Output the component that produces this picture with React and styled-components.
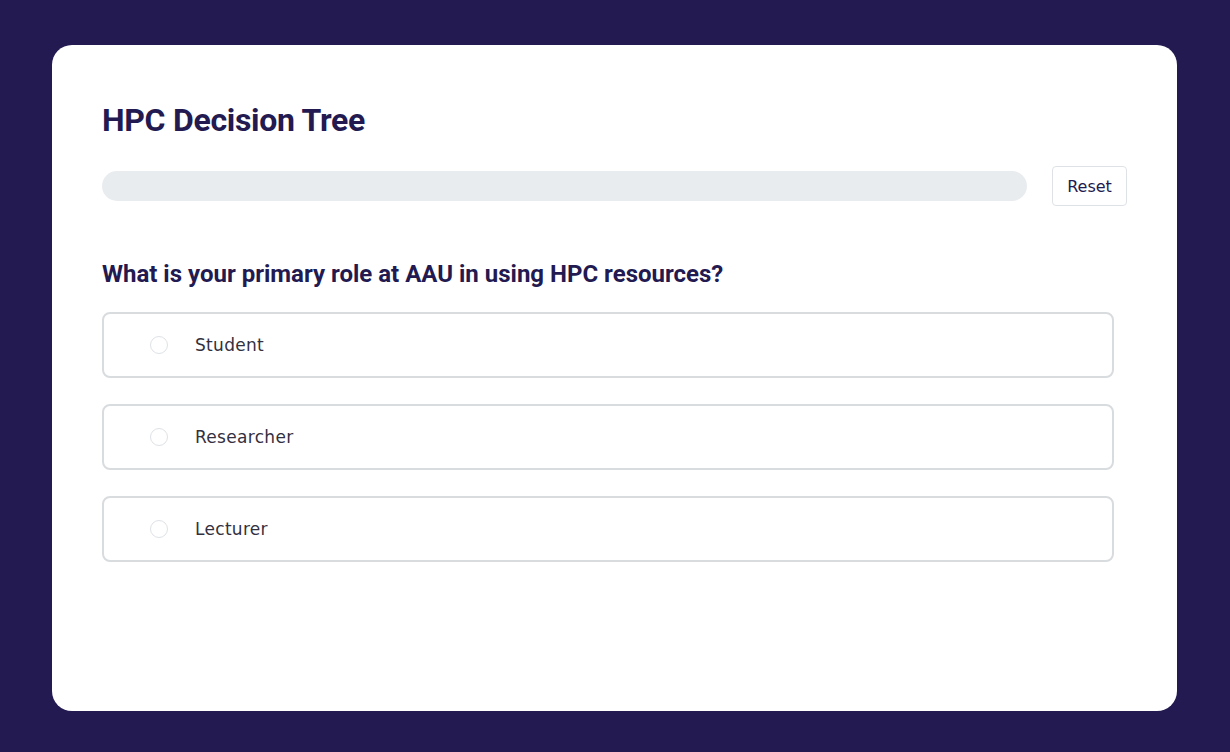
import styled, { createGlobalStyle } from "styled-components"

const GlobalStyle = createGlobalStyle`
    html, body {
        margin: 0;
        padding: 0;
        background: #221a50;
    }
    body {
        font-family: "DejaVu Sans", "Open Sans", sans-serif;
    }
`

const Page = styled.div`
    min-height: 752px;
    box-sizing: border-box;
    padding: 45px 53px 41px 52px;
    background: #221a50;
`

const Card = styled.div`
    background: #fff;
    border-radius: 20px;
    box-sizing: border-box;
    height: 666px;
    padding: 55px 50px 50px;
`

const Title = styled.h1`
    margin: 0 0 26px;
    font-family: Roboto, sans-serif;
    font-weight: 700;
    font-size: 32px;
    line-height: 40px;
    color: #221a50;
    letter-spacing: -0.3px;
`

const ProgressRow = styled.div`
    display: flex;
    align-items: center;
    gap: 25px;
`

const Track = styled.div`
    flex: 1;
    height: 30px;
    border-radius: 15px;
    background: #e9ecef;
    overflow: hidden;
`

const Fill = styled.div`
    height: 100%;
    background: #221a50;
`

const ResetButton = styled.button`
    width: 75px;
    height: 40px;
    padding: 0;
    border: 1px solid #dee2e6;
    border-radius: 4px;
    background: #fff;
    color: #221a50;
    font-family: "DejaVu Sans", sans-serif;
    font-size: 16px;
    cursor: pointer;
`

const Question = styled.h2`
    margin: 54px 0 24px;
    font-family: Roboto, sans-serif;
    font-weight: 700;
    font-size: 24px;
    line-height: 28px;
    color: #221a50;
`

const Options = styled.div`
    display: flex;
    flex-direction: column;
    gap: 26px;
    margin-right: 13px;
`

const Option = styled.label`
    display: flex;
    align-items: center;
    gap: 27px;
    height: 66px;
    box-sizing: border-box;
    padding-left: 46px;
    border: 2px solid #d9dcdf;
    border-radius: 8px;
    cursor: pointer;
    font-size: 17px;
    letter-spacing: 0.3px;
    color: #33303f;
`

const Radio = styled.span`
    width: 18px;
    height: 18px;
    box-sizing: border-box;
    border: 1px solid #dee2e6;
    border-radius: 50%;
    background: #fff;
`

const roles = ["Student", "Researcher", "Lecturer"]

export default function App() {
    const progress = 0

    return (
        <>
            <GlobalStyle />
            <Page>
                <Card>
                    <Title>HPC Decision Tree</Title>
                    <ProgressRow>
                        <Track>
                            <Fill style={{ width: `${progress}%` }} />
                        </Track>
                        <ResetButton>Reset</ResetButton>
                    </ProgressRow>
                    <Question>What is your primary role at AAU in using HPC resources?</Question>
                    <Options>
                        {roles.map(role => (
                            <Option key={role}>
                                <Radio />
                                {role}
                            </Option>
                        ))}
                    </Options>
                </Card>
            </Page>
        </>
    )
}
